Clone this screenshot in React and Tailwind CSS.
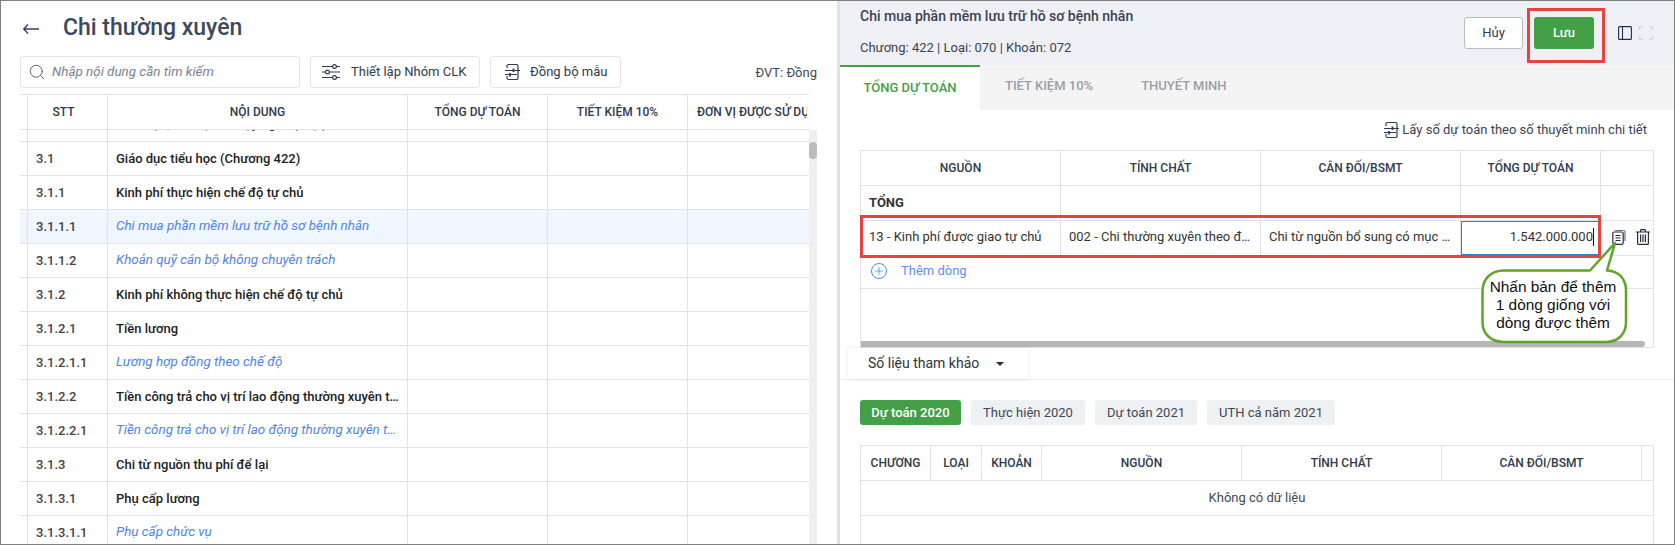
import React from 'react';
import { Search, Plus } from 'lucide-react';

const leftRows = [
    { stt: '3.1', text: 'Giáo dục tiểu học (Chương 422)' },
    { stt: '3.1.1', text: 'Kinh phí thực hiện chế độ tự chủ' },
    { stt: '3.1.1.1', text: 'Chi mua phần mềm lưu trữ hồ sơ bệnh nhân', leaf: true, active: true },
    { stt: '3.1.1.2', text: 'Khoản quỹ cán bộ không chuyên trách', leaf: true },
    { stt: '3.1.2', text: 'Kinh phí không thực hiện chế độ tự chủ' },
    { stt: '3.1.2.1', text: 'Tiền lương' },
    { stt: '3.1.2.1.1', text: 'Lương hợp đồng theo chế độ', leaf: true },
    { stt: '3.1.2.2', text: 'Tiền công trả cho vị trí lao động thường xuyên theo hợp đồng' },
    { stt: '3.1.2.2.1', text: 'Tiền công trả cho vị trí lao động thường xuyên theo hợp đồng', leaf: true },
    { stt: '3.1.3', text: 'Chi từ nguồn thu phí để lại' },
    { stt: '3.1.3.1', text: 'Phụ cấp lương' },
    { stt: '3.1.3.1.1', text: 'Phụ cấp chức vụ', leaf: true },
];

const leftCols = 'grid grid-cols-[8px_80px_300px_140px_140px_121px]';
const budgetCols = 'grid grid-cols-[200px_200px_200px_140px_1fr]';
const refCols = 'grid grid-cols-[70px_51px_60px_200px_200px_200px_1fr]';

const SyncIcon = ({ className }) => (
    <svg viewBox="0 0 16 18" fill="none" stroke="#2f3b52" strokeWidth="1.2" className={className}>
        <path d="M3 5V3a1.5 1.5 0 0 1 1.5-1.5h8A1.5 1.5 0 0 1 14 3v12a1.5 1.5 0 0 1-1.5 1.5h-8A1.5 1.5 0 0 1 3 15v-2" />
        <path d="M1 7.5h15M1 11.5h12" />
        <path d="M9.5 5.5v3.5M6 10v3.5" strokeWidth="1.8" />
    </svg>
);

const SlidersIcon = () => (
    <svg viewBox="0 0 18 16" fill="none" stroke="#2f3b52" strokeWidth="1.2" className="h-4 w-[18px]">
        <path d="M0 2.5h10.5M14.5 2.5h3.5M0 8h3.5M7.5 8h10.5M0 13.5h10.5M14.5 13.5h3.5" />
        <circle cx="12.5" cy="2.5" r="1.9" />
        <circle cx="5.5" cy="8" r="1.9" />
        <circle cx="12.5" cy="13.5" r="1.9" />
    </svg>
);

const BackArrow = () => (
    <svg viewBox="0 0 16 10" fill="none" stroke="#33415c" strokeWidth="1.4" className="h-2.5 w-4">
        <path d="M0.8 5H16M5 0.6L0.8 5L5 9.4" />
    </svg>
);

const CopyIcon = () => (
    <svg viewBox="0 0 14 16" fill="none" stroke="#1f2d47" strokeWidth="1.2" className="h-4 w-3.5">
        <path d="M3 1.5h8.5a1.5 1.5 0 0 1 1.5 1.5v9" stroke="#6b7688" />
        <rect x="0.8" y="3" width="10.4" height="12.4" rx="1.6" />
        <path d="M3.5 6.5h5M3.5 9h5M3.5 11.5h5" />
    </svg>
);

const TrashIcon = () => (
    <svg viewBox="0 0 14 16" fill="none" stroke="#1f2d47" strokeWidth="1.2" className="h-4 w-3.5">
        <path d="M0 3h14M4.6 3V1.2a.6.6 0 0 1 .6-.6h3.6a.6.6 0 0 1 .6.6V3" />
        <path d="M1.6 3v11.4a1 1 0 0 0 1 1h8.8a1 1 0 0 0 1-1V3" />
        <path d="M4.6 5.5v7.5M7 5.5v7.5M9.4 5.5v7.5" />
    </svg>
);

const PanelIcon = () => (
    <svg viewBox="0 0 14 14" fill="none" stroke="#1f2d47" strokeWidth="1.1" className="h-3.5 w-3.5">
        <rect x="0.6" y="0.6" width="12.8" height="12.8" rx="1" />
        <path d="M4.5 0.6v12.8" />
    </svg>
);

const ExpandIcon = () => (
    <svg viewBox="0 0 14 14" fill="none" stroke="#d0d3d8" strokeWidth="1.1" className="h-3.5 w-3.5">
        <path d="M0.6 4V1.6a1 1 0 0 1 1-1H4M10 0.6h2.4a1 1 0 0 1 1 1V4M13.4 10v2.4a1 1 0 0 1-1 1H10M4 13.4H1.6a1 1 0 0 1-1-1V10" />
    </svg>
);

const HeadCell = ({ children }) => (
    <div className="flex min-w-0 items-center justify-center overflow-hidden whitespace-nowrap border-r border-[#e1e2e8] last:border-r-0">
        {children}
    </div>
);

const LeftPanel = () => (
    <div className="flex w-[836px] shrink-0 flex-col pl-[19px]">
        <div className="flex h-[55px] shrink-0 items-center">
            <div className="ml-[3px] flex"><BackArrow /></div>
            <h1 className="ml-6 text-[23px] font-medium text-[#3a4a5e]">Chi thường xuyên</h1>
        </div>
        <div className="flex h-8 shrink-0 items-center">
            <div className="flex h-8 w-[280px] items-center rounded-[3px] border border-[#e3e4e8] pl-[7px]">
                <Search className="h-[18px] w-[18px] text-[#4a5568]" strokeWidth={1.2} />
                <span className="ml-[6px] pt-px text-[13.4px] italic text-[#7b8190]">Nhập nội dung cần tìm kiếm</span>
            </div>
            <div className="ml-2.5 flex h-8 w-[170px] items-center rounded-[3px] border border-[#e3e4e8] pl-[11px] text-[13px] text-[#2f3a4c]">
                <SlidersIcon />
                <span className="ml-[11px]">Thiết lập Nhóm CLK</span>
            </div>
            <div className="ml-2.5 flex h-8 w-[131px] items-center rounded-[3px] border border-[#e3e4e8] pl-[13px] text-[13px] text-[#2f3a4c]">
                <SyncIcon className="h-[18px] w-4" />
                <span className="ml-2.5">Đồng bộ mẫu</span>
            </div>
            <span className="ml-auto mr-[20px] pt-0.5 text-[13px] text-[#3f4756]">ĐVT: Đồng</span>
        </div>
        <div className="mt-[6px] flex min-h-0 flex-1 flex-col">
            <div className={`${leftCols} h-[36px] w-[789px] shrink-0 border-y border-[#e1e2e8] text-[12px] font-medium text-[#2f3a4c]`}>
                <div className="border-r border-[#e1e2e8]" />
                <div className="flex items-center justify-center border-r border-[#e1e2e8] pr-2">STT</div>
                <HeadCell>NỘI DUNG</HeadCell>
                <HeadCell>TỔNG DỰ TOÁN</HeadCell>
                <HeadCell>TIẾT KIỆM 10%</HeadCell>
                <div className="min-w-0 pl-[9px] pr-[2px]">
                    <div className="overflow-hidden whitespace-nowrap leading-[34px]">ĐƠN VỊ ĐƯỢC SỬ DỤNG</div>
                </div>
            </div>
            <div className="flex min-h-0 flex-1">
                <div className="w-[789px] shrink-0 overflow-hidden text-[13px]">
                    <div className={`${leftCols} h-3 border-b border-[#e1e2e8]`}>
                        <div className="border-r border-[#e1e2e8]" />
                        <div className="border-r border-[#e1e2e8]" />
                        <div className="overflow-hidden border-r border-[#e1e2e8]">
                            <div className="mt-[-16px] whitespace-nowrap pl-2 font-medium leading-5 text-[#222]">Giáo dục, đào tạo và dạy nghề (Loại)</div>
                        </div>
                        <div className="border-r border-[#e1e2e8]" />
                        <div className="border-r border-[#e1e2e8]" />
                        <div />
                    </div>
                    {leftRows.map((row) => (
                        <div key={row.stt} className={`${leftCols} h-[34px] border-b border-[#e1e2e8] ${row.active ? 'bg-[#eff6fd]' : ''}`}>
                            <div className="border-r border-[#e1e2e8]" />
                            <div className="flex items-center border-r border-[#e1e2e8] pl-2 font-medium text-[#444]">{row.stt}</div>
                            <div className={`flex min-w-0 items-center border-r border-[#e1e2e8] pl-2 ${row.leaf ? 'pr-[9px]' : 'pr-[5px]'}`}>
                                <span className={`truncate ${row.leaf ? 'text-[13.4px] italic text-[#4f83f1]' : 'font-medium text-[#222]'}`}>{row.text}</span>
                            </div>
                            <div className="border-r border-[#e1e2e8]" />
                            <div className="border-r border-[#e1e2e8]" />
                            <div />
                        </div>
                    ))}
                </div>
                <div className="w-2 shrink-0 bg-[#efefef] pt-3">
                    <div className="h-[17px] rounded-full bg-[#bcbcbc]" />
                </div>
            </div>
        </div>
    </div>
);

const DetailPanel = () => (
    <div className="flex min-w-0 flex-1 flex-col">
        <div className="flex h-[64px] shrink-0 bg-[#eff0f5] pl-5">
            <div className="flex-1 text-[#3a4352]">
                <div className="mt-[5px] text-[14px] font-medium leading-5">Chi mua phần mềm lưu trữ hồ sơ bệnh nhân</div>
                <div className="mt-3 text-[13px] leading-5">Chương: 422 | Loại: 070 | Khoản: 072</div>
            </div>
            <div className="mt-4 flex h-8 items-center pr-[21px]">
                <button className="h-8 w-[59px] rounded-[3px] border border-[#b9bcc2] bg-white text-[13px] text-[#2f3a4c]">Hủy</button>
                <button className="ml-[11px] h-8 w-[60px] rounded-[3px] bg-[#43a047] text-[13px] font-medium text-white">Lưu</button>
                <div className="ml-6 flex"><PanelIcon /></div>
                <div className="ml-[7px] flex"><ExpandIcon /></div>
            </div>
        </div>
        <div className="flex h-[45px] shrink-0 bg-[#f4f4f4] text-[13px] font-medium text-[#9a9ea6]">
            <div className="flex w-[140px] items-center justify-center border-t-2 border-[#43a047] bg-white pb-px text-[#43a047]">TỔNG DỰ TOÁN</div>
            <div className="ml-[25px] flex items-center pb-1">TIẾT KIỆM 10%</div>
            <div className="ml-12 flex items-center pb-1">THUYẾT MINH</div>
        </div>
        <div className="flex h-10 shrink-0 items-center justify-end pr-[27px] text-[13px] text-[#3a4352]">
            <SyncIcon className="h-[18px] w-4" />
            <span className="ml-[3px]">Lấy số dự toán theo số thuyết minh chi tiết</span>
        </div>
        <div className="mx-5 flex h-[198px] shrink-0 flex-col border border-[#e1e2e8] text-[13px]">
            <div className={`${budgetCols} h-[35px] shrink-0 border-b border-[#e1e2e8] text-[12px] font-medium text-[#2f3a4c]`}>
                <HeadCell>NGUỒN</HeadCell>
                <HeadCell>TÍNH CHẤT</HeadCell>
                <HeadCell>CÂN ĐỐI/BSMT</HeadCell>
                <HeadCell>TỔNG DỰ TOÁN</HeadCell>
                <div />
            </div>
            <div className={`${budgetCols} h-[35px] shrink-0 border-b border-[#e1e2e8]`}>
                <div className="flex items-center border-r border-[#e1e2e8] pl-2 font-bold text-[#333]">TỔNG</div>
                <div className="border-r border-[#e1e2e8]" />
                <div className="border-r border-[#e1e2e8]" />
                <div className="border-r border-[#e1e2e8]" />
                <div />
            </div>
            <div className={`${budgetCols} h-[35px] shrink-0 border-b border-[#e1e2e8] text-[#333]`}>
                <div className="flex items-center border-r border-[#e1e2e8] pb-0.5 pl-2">13 - Kinh phí được giao tự chủ</div>
                <div className="flex min-w-0 items-center border-r border-[#e1e2e8] px-2 pb-0.5">
                    <span className="truncate">002 - Chi thường xuyên theo định mức</span>
                </div>
                <div className="flex min-w-0 items-center border-r border-[#e1e2e8] px-2 pb-0.5">
                    <span className="truncate">Chi từ nguồn bổ sung có mục tiêu khác</span>
                </div>
                <div className="flex items-center justify-end border border-[#2a83cf] pb-0.5 pr-[6px]">
                    <span className="border-r border-[#111] leading-[18px]">1.542.000.000</span>
                </div>
                <div className="flex items-center pb-[3px] pl-[11px]">
                    <CopyIcon />
                    <div className="ml-2.5 flex"><TrashIcon /></div>
                </div>
            </div>
            <div className="flex h-[33px] shrink-0 items-center border-b border-[#e1e2e8] pb-0.5 pl-[10px] text-[#5f8ff0]">
                <span className="flex h-4 w-4 items-center justify-center rounded-full border border-[#3d93e6]">
                    <Plus className="h-3 w-3 text-[#3d93e6]" strokeWidth={1.6} />
                </span>
                <span className="ml-[14px]">Thêm dòng</span>
            </div>
            <div className="flex-1" />
            <div className="h-[6px] w-[784px] shrink-0 rounded-r-full bg-[#b6b6b6]" />
        </div>
        <div className="flex h-8 shrink-0 border-b border-[#eeeeee] pl-2">
            <div className="flex w-[180px] items-center bg-white pl-5 text-[14px] text-[#333] shadow-[0_0_4px_rgba(0,0,0,0.1)]">
                Số liệu tham khảo
                <span className="ml-[17px] h-0 w-0 border-x-[4px] border-t-[4px] border-x-transparent border-t-[#1f2d47]" />
            </div>
        </div>
        <div className="mt-5 flex h-[25px] shrink-0 gap-2.5 pl-5 text-[13px] text-[#3f4756]">
            <div className="flex w-[101px] items-center justify-center rounded-[3px] bg-[#43a047] font-medium text-white">Dự toán 2020</div>
            <div className="flex w-[114px] items-center justify-center rounded-[3px] bg-[#eef1f4]">Thực hiện 2020</div>
            <div className="flex w-[102px] items-center justify-center rounded-[3px] bg-[#eef1f4]">Dự toán 2021</div>
            <div className="flex w-[128px] items-center justify-center rounded-[3px] bg-[#eef1f4]">UTH cả năm 2021</div>
        </div>
        <div className="mx-5 mt-5 flex-1 border-x border-t border-[#e1e2e8] text-[13px]">
            <div className={`${refCols} h-[35px] border-b border-[#e1e2e8] text-[12px] font-medium text-[#2f3a4c]`}>
                <HeadCell>CHƯƠNG</HeadCell>
                <HeadCell>LOẠI</HeadCell>
                <HeadCell>KHOẢN</HeadCell>
                <HeadCell>NGUỒN</HeadCell>
                <HeadCell>TÍNH CHẤT</HeadCell>
                <HeadCell>CÂN ĐỐI/BSMT</HeadCell>
                <div />
            </div>
            <div className="flex h-[35px] items-center justify-center border-b border-[#e1e2e8] text-[#3f4756]">Không có dữ liệu</div>
        </div>
    </div>
);

// red marks and the speech bubble lie over the screen
const Annotations = () => (
    <>
        <div className="absolute left-[1526px] top-[7px] h-[55px] w-[78px] border-[3px] border-[#e8433f]" />
        <div className="absolute left-[859px] top-[214px] h-[43px] w-[741px] border-[3px] border-[#e8433f]" />
        <svg className="absolute left-[1477px] top-[237px] h-[108px] w-[152px]" viewBox="0 0 152 108" fill="none">
            <path
                d="M26 32.5H112L137 5L129 32.5C142 33 148 42 148 53V84C148 96 140 104 128 104H26C13 104 4.5 96 4.5 84V53C4.5 41 13 32.5 26 32.5Z"
                fill="white"
                stroke="#5fa528"
                strokeWidth="2.5"
                strokeLinejoin="round"
            />
        </svg>
        <div className="absolute left-[1481px] top-[277px] w-[142px] text-center font-['Liberation_Sans',sans-serif] text-[15.4px] leading-[18px] text-[#111]">
            Nhấn bản để thêm<br />1 dòng giống với<br />dòng được thêm
        </div>
    </>
);

export default function App() {
    return (
        <div className="relative flex h-[545px] w-[1675px] overflow-hidden border border-[#808080] bg-white font-['Roboto',sans-serif]">
            <LeftPanel />
            <div className="w-[3px] shrink-0 bg-[#dfe2ea]" />
            <DetailPanel />
            <Annotations />
        </div>
    );
}
